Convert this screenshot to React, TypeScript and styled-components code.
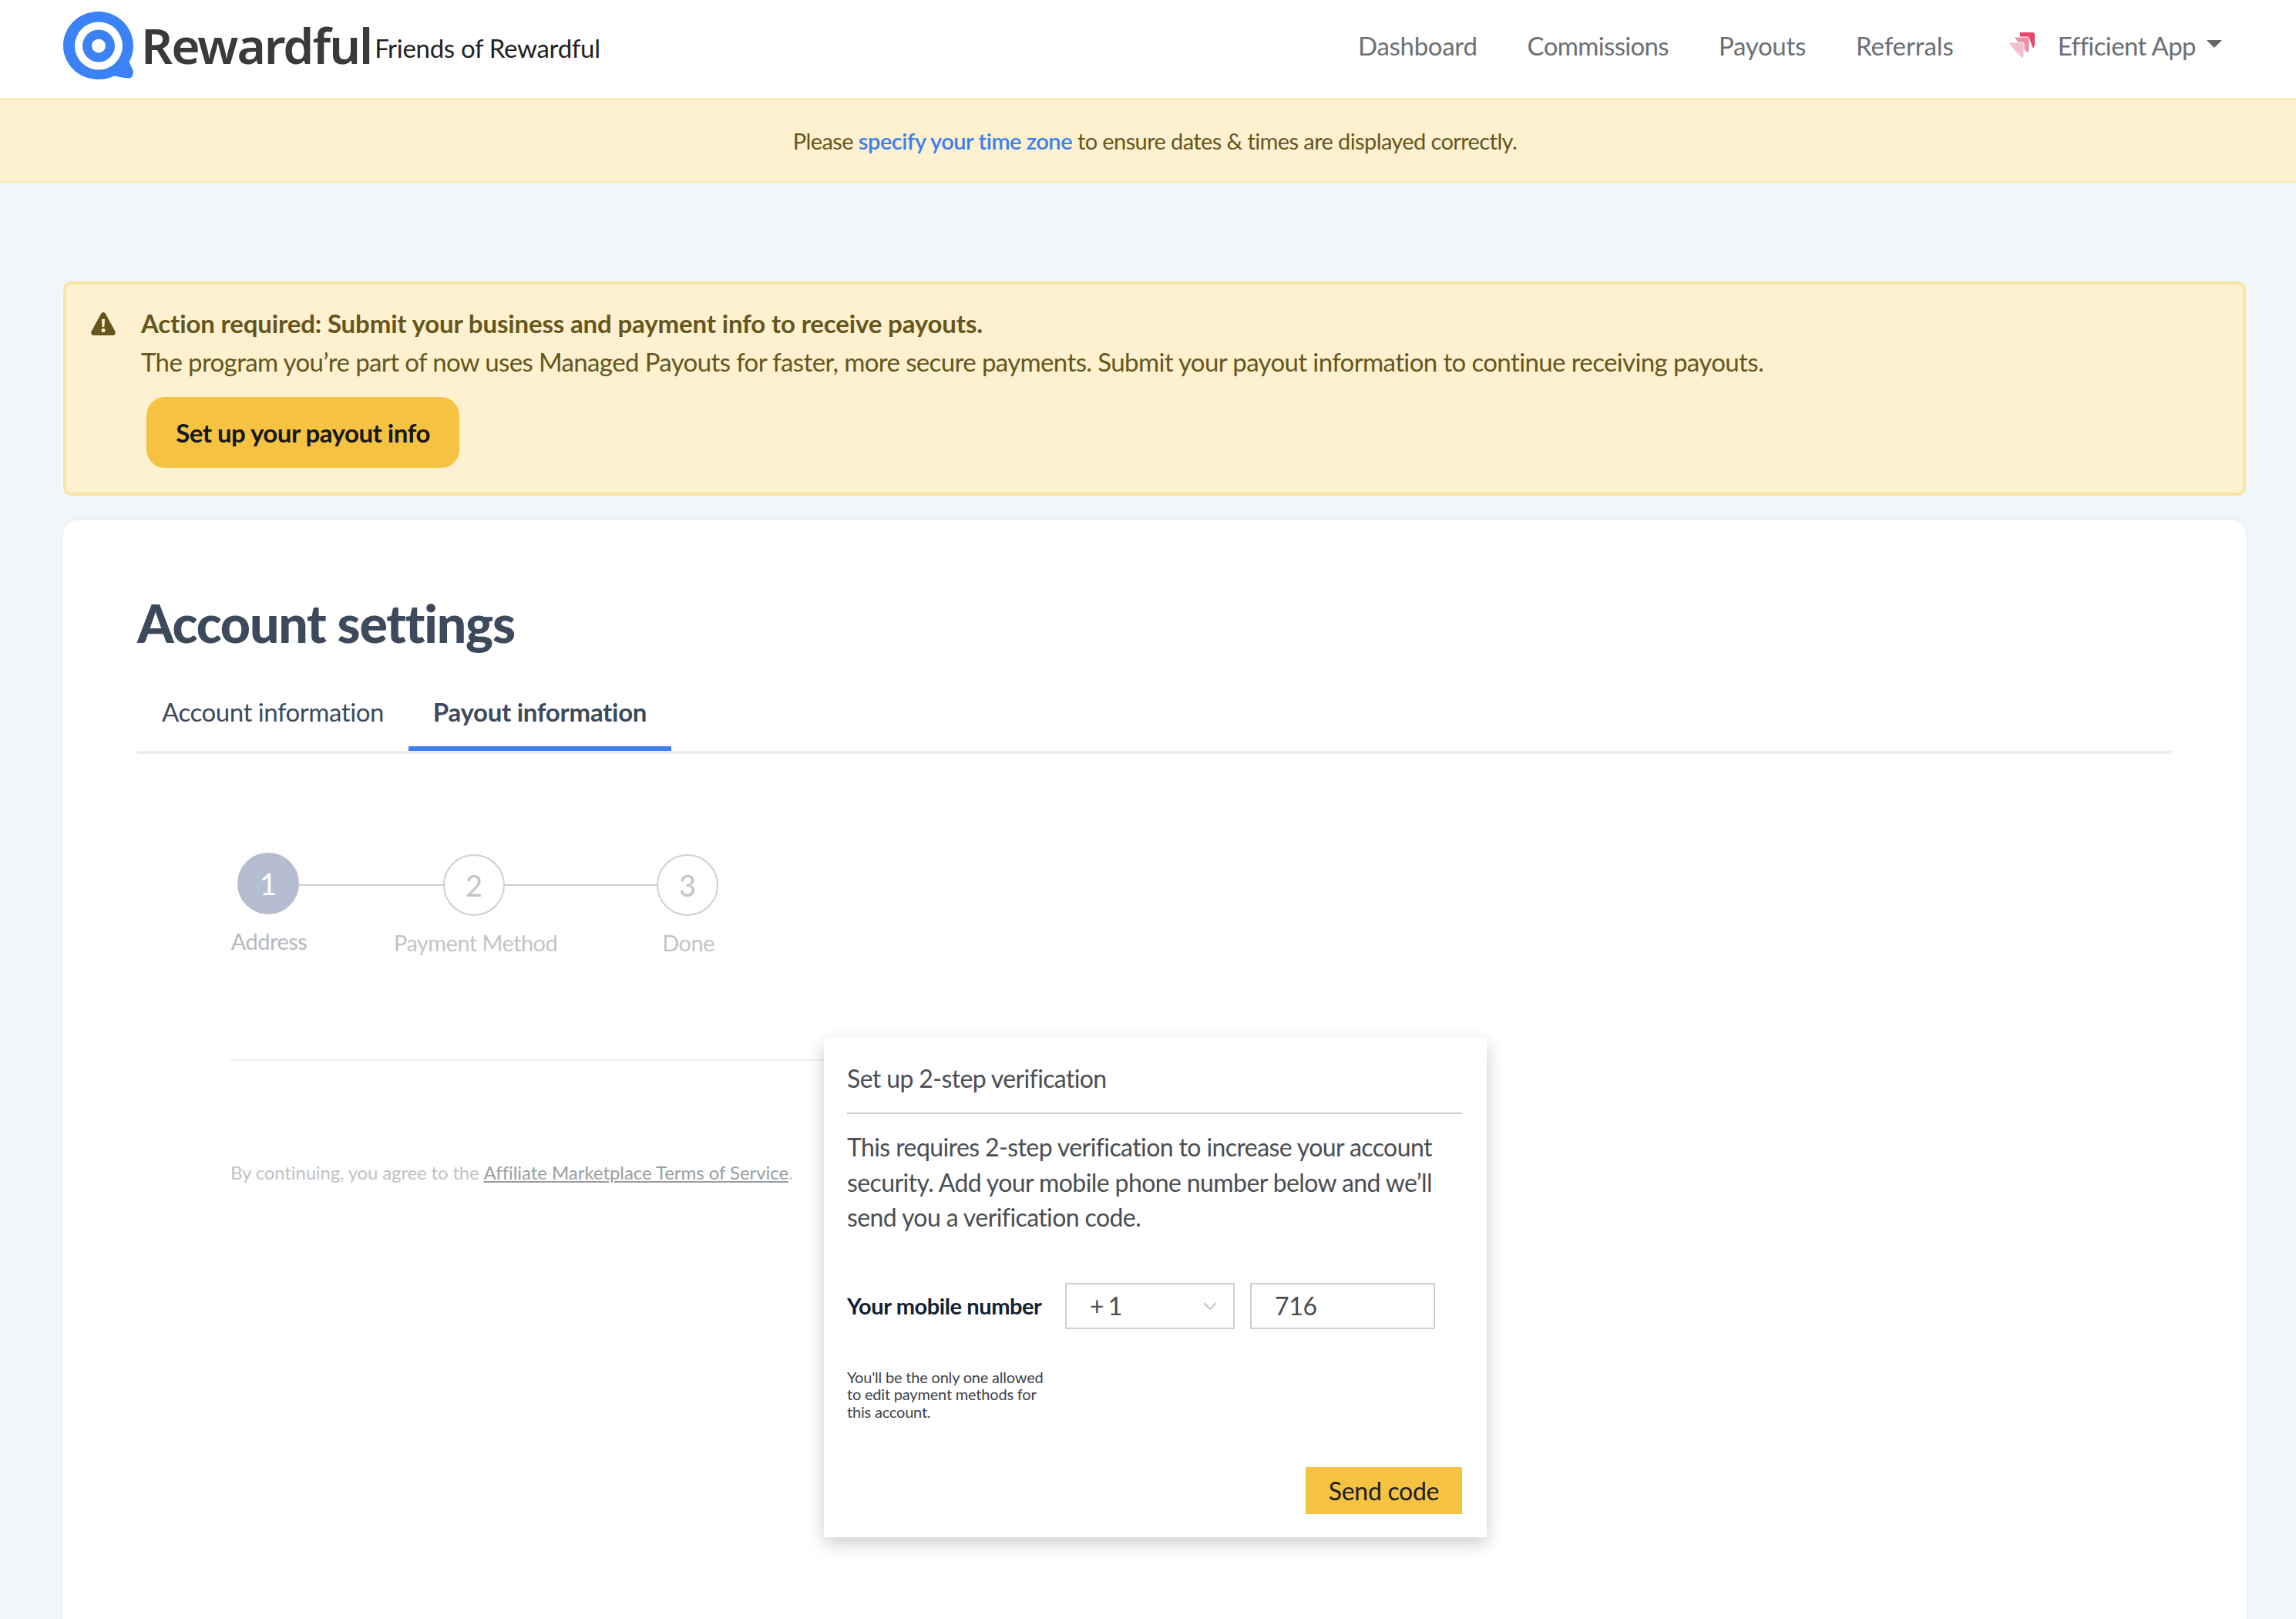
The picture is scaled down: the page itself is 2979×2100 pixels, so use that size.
import React from "react";
import styled, { createGlobalStyle } from "styled-components";

const Global = createGlobalStyle`
  html, body { margin: 0; padding: 0; height: 2100px; overflow: hidden; background: #f1f6fa; }
  body { font-family: Lato, "Liberation Sans", sans-serif; }
  #root { height: 2100px; overflow: hidden; }
  * { box-sizing: border-box; }
`;

const Nav = styled.header`
  height: 127px; background: #fff; display: flex; align-items: center; justify-content: space-between;
  padding: 0 96px 10px 82px;
`;
const Brand = styled.div`display: flex; align-items: center;`;
const LogoName = styled.span`
  font-family: "Noto Sans", sans-serif; font-size: 64px; font-weight: 600; color: #3a3a3a;
  letter-spacing: -2px; margin-left: 9px; line-height: 1;
`;
const ProgramName = styled.span`font-size: 33px; letter-spacing: -0.3px; color: #222; margin-left: 4px; position: relative; top: 3px;`;
const NavLinks = styled.nav`display: flex; align-items: center; gap: 65px;`;
const NavLink = styled.a<{ $ls?: number }>`
  font-size: 33px; letter-spacing: ${(p) => p.$ls ?? -0.3}px; color: #6b6f73; display: flex; align-items: center;
`;
const AccountLink = styled(NavLink)`margin-left: 2px;`;
const Caret = styled.span`
  width: 0; height: 0; border-left: 10px solid transparent; border-right: 10px solid transparent;
  border-top: 10px solid #666; margin-left: 14px; margin-top: -4px;
`;
const AppIcon = styled.svg`width: 40px; height: 38px; margin-right: 28px;`;
const Banner = styled.div`
  height: 110px; background: #fdf1d0; border-top: 2px solid #f6e8ae; border-bottom: 2px solid #f6e8ae;
  display: flex; align-items: center; justify-content: center; font-size: 29px; letter-spacing: -0.6px; color: #66561d;
  white-space: pre; padding-left: 18px;
`;
const BannerLink = styled.a`color: #3b7ff0; font-weight: 600; letter-spacing: -0.45px;`;
const Main = styled.main`padding: 128px 65px 0 82px;`;
const Alert = styled.section`
  height: 278px; background: #fdf1d0; border: 4px solid #f8e6a4; border-radius: 10px;
  padding: 25px 32px; display: flex; gap: 33px; color: #66561d;
`;
const AlertIcon = styled.svg`width: 32px; height: 30px; flex: none; margin-top: 11px;`;
const AlertBody = styled.div`display: flex; flex-direction: column; align-items: flex-start;`;
const AlertTitle = styled.div`font-size: 33px; letter-spacing: -0.15px; font-weight: 700; line-height: 50px;`;
const AlertText = styled.div`font-size: 33px; letter-spacing: -0.62px; line-height: 50px;`;
const PrimaryButton = styled.button`
  margin: 21px 0 0 7px; width: 406px; height: 92px; border: 0; border-radius: 24px; background: #f5c242;
  font: 700 33px Lato, sans-serif; letter-spacing: -0.5px; color: #15171a;
`;
const Card = styled.section`
  margin-top: 32px; background: #fff; border-radius: 18px 18px 0 0; height: 1500px; padding: 92px 96px 0;
  position: relative; box-shadow: 0 -2px 6px rgba(60, 70, 90, 0.04);
`;
const Title = styled.h1`margin: 0; font-size: 68px; letter-spacing: -1.2px; line-height: 82px; font-weight: 900; color: #3c4a5c;`;
const Tabs = styled.div`display: flex; margin-top: 36px; border-bottom: 4px solid #eceeef; height: 93px;`;
const Tab = styled.div<{ $active?: boolean }>`
  padding: 0 32px 8px; height: 89px; display: flex; align-items: center; font-size: 33px;
  color: #3c4a5c; font-weight: ${(p) => (p.$active ? 700 : 400)};
  letter-spacing: ${(p) => (p.$active ? "-0.3px" : "-0.45px")};
  border-bottom: 6px solid ${(p) => (p.$active ? "#3b7ff0" : "transparent")};
`;
const StepCircles = styled.div`display: flex; align-items: center; margin: 128px 0 0 130px;`;
const Circle = styled.div<{ $active?: boolean }>`
  flex: none; width: 80px; height: 80px; border-radius: 50%; display: flex; align-items: center; justify-content: center;
  font-size: 38px; color: ${(p) => (p.$active ? "#fff" : "#c4c4c4")};
  background: ${(p) => (p.$active ? "#b5bdd0" : "#fff")};
  border: 2px solid ${(p) => (p.$active ? "#b5bdd0" : "#cfcfcf")};
  margin-bottom: ${(p) => (p.$active ? "4px" : "0")};
`;
const StepLine = styled.div<{ $w: number }>`flex: none; height: 2px; background: #cdcdcd; width: ${(p) => p.$w}px;`;
const StepLabels = styled.div`display: flex; align-items: flex-start; margin: 15px 0 0 121px;`;
const StepLabel = styled.div<{ $active?: boolean; $w: number; $gap: number }>`
  width: ${(p) => p.$w}px; margin-right: ${(p) => p.$gap}px; text-align: center; font-size: 29px; line-height: 36px;
  letter-spacing: -0.55px; color: ${(p) => (p.$active ? "#b5b7bd" : "#c4c4c4")}; white-space: nowrap;
  margin-top: ${(p) => (p.$active ? "-2px" : "0")};
`;
const Rule = styled.hr`border: 0; border-top: 2px solid #eeeeee; margin: 133px 0 0 121px; width: 780px;`;
const Terms = styled.p`margin: 130px 0 0 121px; font-size: 24px; letter-spacing: -0.15px; line-height: 30px; color: #c0c2c4;`;
const TermsLink = styled.a`color: #9a9ea1; text-decoration: underline; letter-spacing: -0.05px;`;
const Modal = styled.div`
  position: absolute; left: 987px; top: 671px; width: 860px; height: 648px; background: #fff; padding: 28px 30px 30px;
  box-shadow: 0 8px 22px rgba(0, 0, 0, 0.2); display: flex; flex-direction: column;
`;
const ModalTitle = styled.div`
  font-size: 32px; letter-spacing: -0.63px; line-height: 50px; color: #4a4e52; height: 71px; border-bottom: 2px solid #cfcfcf; width: 798px; flex: none;
`;
const ModalText = styled.p`margin: 20px 0 0; font-size: 32px; letter-spacing: -0.6px; line-height: 45.6px; color: #4a4e52;`;
const PhoneRow = styled.div`display: flex; align-items: center; margin-top: 62px; height: 60px;`;
const PhoneLabel = styled.div`font-size: 29px; letter-spacing: -0.42px; font-weight: 700; color: #0f2233; width: 283px; white-space: nowrap;`;
const SelectBox = styled.div`
  width: 220px; height: 60px; border: 2px solid #cfcfcf; display: flex; align-items: center; justify-content: space-between;
  padding: 0 20px 0 30px; font-size: 32px; letter-spacing: -1.5px; color: #4a4e52;
`;
const PhoneInput = styled.div`
  width: 240px; height: 60px; margin-left: 20px; border: 2px solid #cfcfcf; display: flex; align-items: center;
  padding-left: 30px; font-size: 32px; letter-spacing: -0.3px; color: #4a4e52;
`;
const Hint = styled.p`margin: 51px 0 0; font-size: 20px; letter-spacing: -0.2px; line-height: 22.6px; color: #3f4347; width: 270px;`;
const SendButton = styled.button`
  margin: auto 2px 0 auto; width: 203px; height: 61px; border: 0; background: #f5c242; flex: none;
  font: 400 32px Lato, sans-serif; letter-spacing: -0.3px; color: #1a1c1f;
`;

export default function App() {
  return (
    <>
      <Global />
      <Nav>
        <Brand>
          <svg width="92" height="90" viewBox="0 0 92 90" aria-hidden="true">
            <path d="M45.500 1C71 1 91 21 91 45.500C91 53 89 60 85.500 66.500L90 76C92 80 90.500 87 86 87.500C78 87 71 85.500 66 84.500C60 87.500 53 89 45.500 89C20 89 0 69 0 45.500C0 21 20 1 45.500 1Z" fill="#3b82f6" />
            <circle cx="46" cy="45.500" r="31" fill="#fff" />
            <circle cx="46" cy="45.500" r="21" fill="#3b82f6" />
            <circle cx="46" cy="45.500" r="9" fill="#fff" />
          </svg>
          <LogoName>Rewardful</LogoName>
          <ProgramName>Friends of Rewardful</ProgramName>
        </Brand>
        <NavLinks>
          <NavLink>Dashboard</NavLink>
          <NavLink $ls={-0.65}>Commissions</NavLink>
          <NavLink>Payouts</NavLink>
          <NavLink $ls={-0.1}>Referrals</NavLink>
          <AccountLink $ls={-0.6}>
            <AppIcon viewBox="0 0 40 38" aria-hidden="true">
              <path d="M19 2H35Q38 2 38 5V19L36 23L31 10H19Z" fill="#e8466f" />
              <path d="M11 8H28Q31 8 31 11V25L29 29Q19 20 11 8Z" fill="#ee8fa8" stroke="#fff" strokeWidth="1" />
              <path d="M4 15H22Q24 15 24 17V33L22 36Q11 27 4 15Z" fill="#f6bfd0" stroke="#fff" strokeWidth="1" />
            </AppIcon>
            Efficient App
            <Caret />
          </AccountLink>
        </NavLinks>
      </Nav>
      <Banner>
        Please <BannerLink>specify your time zone</BannerLink> to ensure dates &amp; times are displayed correctly.
      </Banner>
      <Main>
        <Alert>
          <AlertIcon viewBox="0 0 32 30" aria-hidden="true">
            <path fillRule="evenodd" d="M16 0C17.500 0 18.500 1 19 2L31.500 25C32.500 27.500 31 30 28.500 30H3.500C1 30 -0.500 27.500 0.500 25L13 2C13.500 1 14.500 0 16 0ZM14 9L14.600 19H17.400L18 9ZM16 21A2.500 2.500 0 1 0 16 26A2.500 2.500 0 1 0 16 21Z" fill="#66561d" />
          </AlertIcon>
          <AlertBody>
            <AlertTitle>Action required: Submit your business and payment info to receive payouts.</AlertTitle>
            <AlertText>The program you’re part of now uses Managed Payouts for faster, more secure payments. Submit your payout information to continue receiving payouts.</AlertText>
            <PrimaryButton>Set up your payout info</PrimaryButton>
          </AlertBody>
        </Alert>
        <Card>
          <Title>Account settings</Title>
          <Tabs>
            <Tab>Account information</Tab>
            <Tab $active>Payout information</Tab>
          </Tabs>
          <StepCircles>
            <Circle $active>1</Circle>
            <StepLine $w={187} />
            <Circle>2</Circle>
            <StepLine $w={197} />
            <Circle>3</Circle>
          </StepCircles>
          <StepLabels>
            <StepLabel $active $w={100} $gap={112}>Address</StepLabel>
            <StepLabel $w={211} $gap={136}>Payment Method</StepLabel>
            <StepLabel $w={70} $gap={0}>Done</StepLabel>
          </StepLabels>
          <Rule />
          <Terms>
            By continuing, you agree to the <TermsLink>Affiliate Marketplace Terms of Service</TermsLink>.
          </Terms>
          <Modal>
            <ModalTitle>Set up 2-step verification</ModalTitle>
            <ModalText>
              This requires 2-step verification to increase your account security. Add your mobile phone number below and we’ll send you a verification code.
            </ModalText>
            <PhoneRow>
              <PhoneLabel>Your mobile number</PhoneLabel>
              <SelectBox>
                + 1
                <svg width="20" height="12" viewBox="0 0 20 12" aria-hidden="true">
                  <path d="M2 2L10 10L18 2" fill="none" stroke="#c4c4c4" strokeWidth="2" />
                </svg>
              </SelectBox>
              <PhoneInput>716</PhoneInput>
            </PhoneRow>
            <Hint>You'll be the only one allowed to edit payment methods for this account.</Hint>
            <SendButton>Send code</SendButton>
          </Modal>
        </Card>
      </Main>
    </>
  );
}
